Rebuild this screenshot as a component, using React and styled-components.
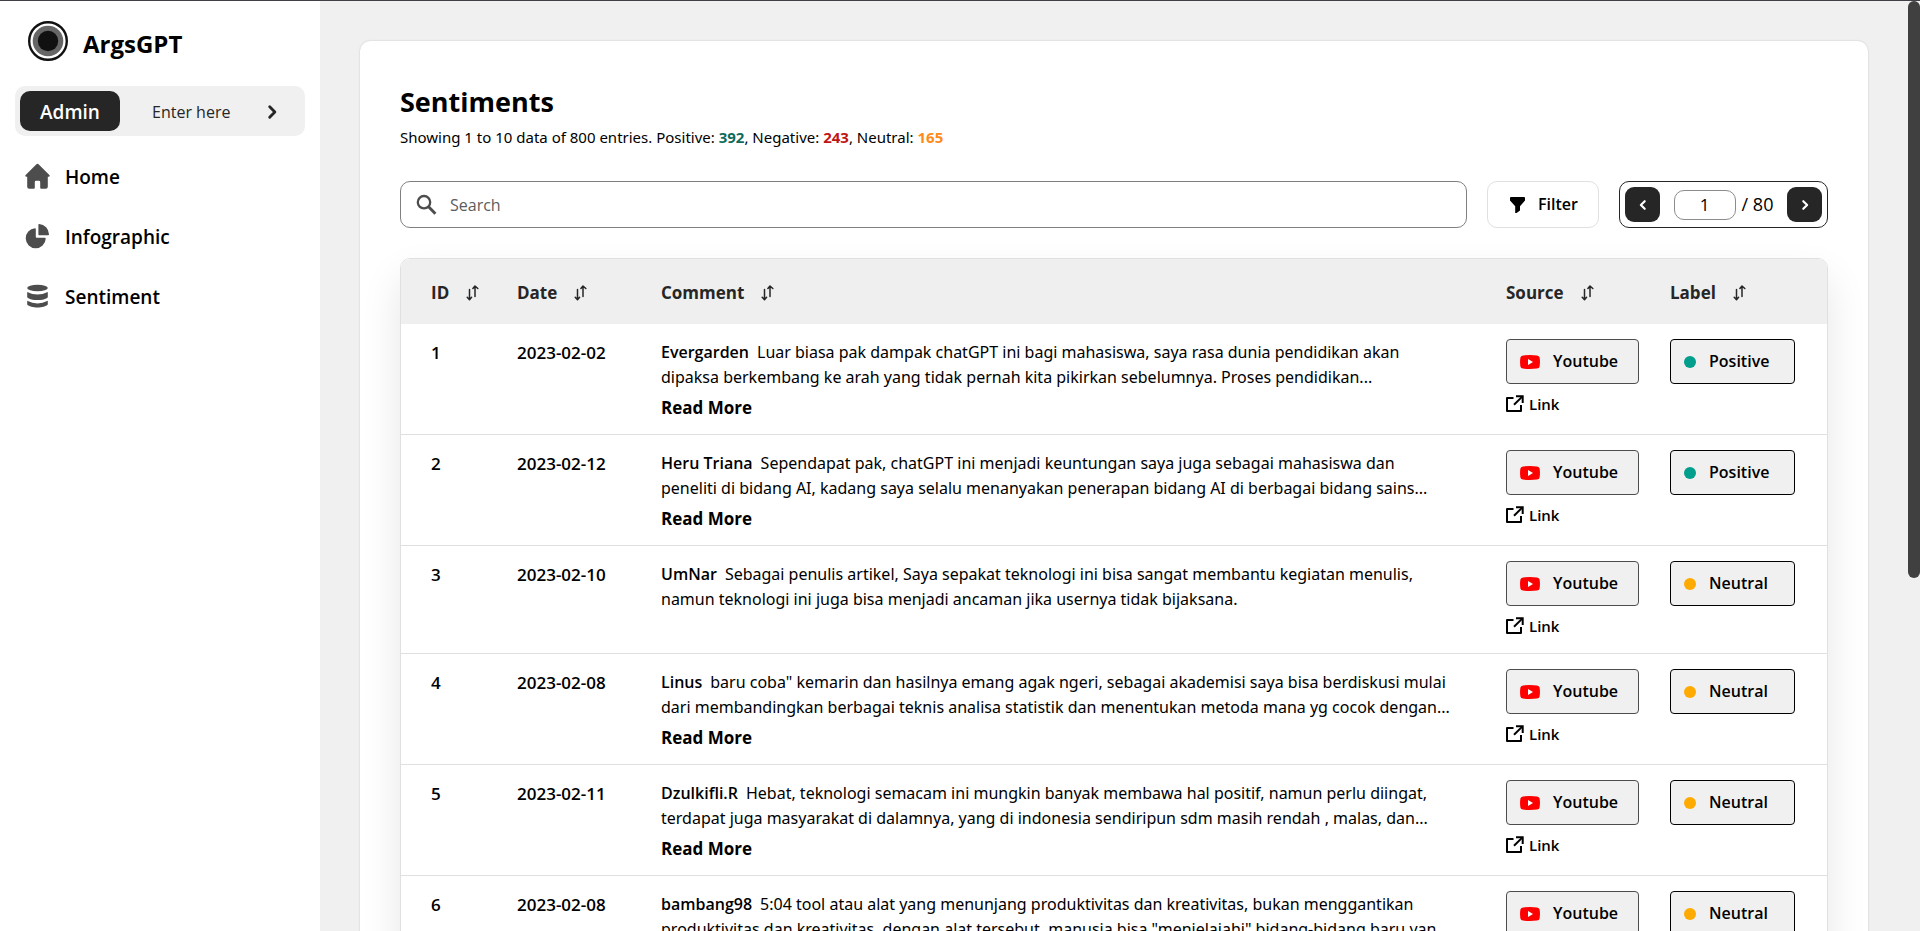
import React from "react";
import styled, { createGlobalStyle } from "styled-components";

const GlobalStyle = createGlobalStyle`
  * { box-sizing: border-box; }
  body {
    margin: 0;
    background: #f0f0f0;
    color: #000;
    font-family: "Open Sans", "Noto Sans", sans-serif;
    font-size: 16px;
    line-height: 25px;
  }
  button, input { font: inherit; color: inherit; margin: 0; }
  button { cursor: pointer; }
  a { color: inherit; text-decoration: none; }
`;

const Shell = styled.div`
  display: flex;
  height: 100vh;
  border-top: 1px solid #404045;
  overflow: hidden;
`;

const Sidebar = styled.aside`
  flex: 0 0 320px;
  padding: 20px 15px;
  background: #fff;
`;

const Brand = styled.div`
  display: flex;
  align-items: center;
  gap: 15px;
  height: 40px;
  padding-left: 13px;
`;

const BrandName = styled.span`
  padding-top: 4px;
  font-size: 24px;
  font-weight: 700;
`;

const AdminCard = styled.div`
  display: flex;
  align-items: center;
  height: 50px;
  margin-top: 25px;
  padding: 5px;
  border-radius: 10px;
  background: #f0f0f0;
`;

const AdminTag = styled.span`
  flex: 0 0 100px;
  height: 40px;
  border-radius: 10px;
  background: #262626;
  color: #fff;
  font-size: 19px;
  font-weight: 600;
  line-height: 42px;
  text-align: center;
`;

const EnterLink = styled.a`
  flex: 1;
  display: flex;
  align-items: center;
  justify-content: space-between;
  padding: 2px 20px 0 32px;
  color: #262626;
`;

const Nav = styled.nav`
  display: flex;
  flex-direction: column;
  gap: 20px;
  margin-top: 20px;
`;

const NavLink = styled.a`
  display: flex;
  align-items: center;
  gap: 14px;
  height: 40px;
  padding-left: 9px;
`;

const NavText = styled.span`
  padding-top: 2px;
  font-size: 19px;
  font-weight: 600;
`;

const NavIcon = styled.svg.attrs({ width: 27, height: 27, viewBox: "0 0 27 27", fill: "currentColor", "aria-hidden": true })`
  color: #4d4d4d;
`;

const Main = styled.main`
  flex: 1;
  min-width: 0;
  padding: 40px;
  overflow-y: auto;
  scrollbar-width: none;
`;

const Card = styled.section`
  padding: 40px;
  border-radius: 10px;
  background: #fff;
  box-shadow: 0 0 2px rgba(0, 0, 0, 0.2);
`;

const Title = styled.h1`
  margin: 0;
  font-size: 27px;
  font-weight: 700;
  line-height: 42px;
`;

const Summary = styled.p`
  margin: 0;
  font-family: "Noto Sans", sans-serif;
  font-size: 15px;
  line-height: 28px;
`;

const TONES = { positive: "#0f6b5c", negative: "#c01515", neutral: "#ff8c1a" };
const Count = styled.strong`
  color: ${(p) => TONES[p.$tone]};
`;

const Toolbar = styled.div`
  display: flex;
  gap: 20px;
  height: 47px;
  margin: 30px 0;
`;

const SearchBox = styled.label`
  flex: 1;
  display: flex;
  align-items: center;
  gap: 12px;
  padding: 0 15px;
  border: 1px solid #808080;
  border-radius: 10px;
  color: #4d4d4d;
`;

const SearchInput = styled.input`
  flex: 1;
  min-width: 0;
  padding: 2px 0 0;
  border: 0;
  outline: 0;
  background: none;
  &::placeholder { color: #5c5c5c; opacity: 1; }
`;

const FilterButton = styled.button`
  display: flex;
  align-items: center;
  gap: 13px;
  width: 112px;
  padding: 0 0 0 22px;
  border: 1px solid #e0e0e0;
  border-radius: 10px;
  background: #fff;
  font-weight: 600;
`;

const Pager = styled.div`
  display: flex;
  align-items: center;
  justify-content: space-between;
  width: 209px;
  padding: 5px;
  border: 1px solid #262626;
  border-radius: 10px;
`;

const PageButton = styled.button`
  display: flex;
  align-items: center;
  justify-content: center;
  width: 35px;
  height: 35px;
  padding: 0;
  border: 0;
  border-radius: 9px;
  background: #262626;
  color: #fff;
`;

const PageCount = styled.label`
  display: flex;
  align-items: center;
  gap: 6px;
  font-size: 18px;
`;

const PageInput = styled.input`
  width: 62px;
  height: 30px;
  border: 1px solid #8c8c8c;
  border-radius: 10px;
  background: #fff;
  font-size: 17px;
  text-align: center;
`;

const TableFrame = styled.div`
  border: 1px solid #e0e0e0;
  border-radius: 10px;
  box-shadow: 0 20px 40px rgba(0, 0, 0, 0.1);
  overflow: hidden;
`;

const Table = styled.table`
  width: 100%;
  border-collapse: separate;
  border-spacing: 0;
  table-layout: fixed;
  background: #fff;
`;

const Col = styled.col`
  width: ${(p) => p.$width};
`;

const HeadCell = styled.th`
  height: 65px;
  padding: 2px 0 0 ${(p) => (p.$first ? "30px" : "0")};
  background: #efefef;
  color: #262626;
  text-align: left;
  font-size: 17px;
  font-weight: 700;
`;

const SortButton = styled.button`
  display: flex;
  align-items: center;
  gap: 17px;
  padding: 0;
  border: 0;
  background: none;
`;

const Cell = styled.td`
  padding: 15px 0 15px ${(p) => (p.$first ? "30px" : "0")};
  border-bottom: 1px solid #e0e0e0;
  vertical-align: top;
  white-space: nowrap;
`;

const TextCell = styled(Cell)`
  padding-top: 16px;
  padding-bottom: 14px;
  font-size: ${(p) => (p.$strong ? "17px" : "16px")};
  font-weight: ${(p) => (p.$strong ? 600 : 400)};
`;

const Comment = styled.p`
  margin: 0;
  font-family: "Noto Sans", sans-serif;
`;

const Author = styled.span`
  margin-right: 8px;
  font-family: "Open Sans", sans-serif;
  font-weight: 600;
`;

const ReadMore = styled.button`
  display: block;
  margin-top: 5px;
  padding: 0;
  border: 0;
  background: none;
  font-size: 17px;
  font-weight: 700;
`;

const Badge = styled.div`
  display: flex;
  align-items: center;
  width: ${(p) => p.$width};
  height: 45px;
  gap: 13px;
  padding-left: 13px;
  border: 1px solid ${(p) => p.$line};
  border-radius: 4px;
  background: #f0f0f0;
  font-weight: 600;
`;

const Dot = styled.span`
  width: 12px;
  height: 12px;
  border-radius: 50%;
  background: ${(p) => p.$color};
`;

const SourceLink = styled.a`
  display: flex;
  align-items: center;
  gap: 5px;
  height: 24px;
  margin-top: 8px;
  font-size: 15px;
  font-weight: 600;
`;

const ScrollTrack = styled.div`
  flex: 0 0 12px;
  background: #f0f0f0;
`;

const ScrollThumb = styled.div`
  height: 62%;
  border-radius: 6px;
  background: #404040;
`;

const Logo = () => (
  <svg width="40" height="40" viewBox="0 0 40 40" aria-hidden="true">
    <circle cx="20" cy="20" r="18.8" fill="#fff" stroke="#111" strokeWidth="2.4" />
    <circle cx="20" cy="20" r="15.3" fill="#666" />
    <circle cx="20" cy="20" r="10.2" fill="#111" />
  </svg>
);

const HomeIcon = () => (
  <NavIcon>
    <path d="M12.200 1.400q1.300-1.200 2.600 0L25.600 12.300q.6 1.200-.8 1.400H23.800V23.800q0 2-2 2H17.200q-1 0-1-1V19q0-1.200-1.200-1.200h-3q-1.200 0-1.200 1.200v5.800q0 1-1 1H5.200q-2 0-2-2V13.700H2.200q-1.400-.2-.8-1.400Z" />
  </NavIcon>
);

const PieIcon = () => (
  <NavIcon>
    <path d="M11 5.300q.8-.1.800.8V14q0 .8.800.8h8.300q.9 0 .8.900A10 10 0 1 1 11 5.300Z" />
    <path d="M14.400 1.800q0-.8.800-.7A10.300 10.300 0 0 1 25 11.300q.1.900-.8.900h-9q-.8 0-.8-.8Z" />
  </NavIcon>
);

const StackIcon = () => (
  <NavIcon>
    <ellipse cx="13.500" cy="5" rx="10.300" ry="3.300" />
    <path d="M3.200 9Q13.500 14.200 23.800 9v5.200C20.500 18 6.500 18 3.200 14.200Z" />
    <path d="M3.200 17.800Q13.500 23 23.800 17.800v3.800C20.500 25.600 6.500 25.600 3.200 21.600Z" />
  </NavIcon>
);

const YoutubeIcon = () => (
  <svg width="20" height="14" viewBox="0 0 20 14" aria-hidden="true">
    <path fill="#f00" d="M3 .4Q10-.4 17 .4q2.300.3 2.600 2.200.7 4.400 0 8.800-.3 1.900-2.600 2.200-7 .8-14 0Q.7 13.300.4 11.400q-.7-4.400 0-8.800Q.7.7 3 .4Z" />
    <path fill="#fff" d="M8 4.100 13 7 8 9.900Z" />
  </svg>
);

const Chevron = ({ left, size = 12 }) => (
  <svg width={size} height={size} viewBox="0 0 14 14" fill="none" stroke="currentColor" strokeWidth="2.5" strokeLinecap="round" strokeLinejoin="round" aria-hidden="true">
    <path d={left ? "M9 2.5 4.5 7 9 11.5" : "M5 2.5 9.5 7 5 11.5"} />
  </svg>
);

const SearchIcon = () => (
  <svg width="22" height="22" viewBox="0 0 22 22" fill="none" stroke="currentColor" aria-hidden="true">
    <circle cx="8" cy="8.200" r="6.200" strokeWidth="2.300" />
    <path d="m12.600 12.800 6.800 7" strokeWidth="2.900" />
  </svg>
);

const FilterIcon = () => (
  <svg width="15" height="16" viewBox="0 0 15 16" fill="currentColor" aria-hidden="true">
    <path d="M1 0h13q1 0 1 1v2.600L10 9.200v4.300L6.600 16H5.200V9.200L0 3.600V1q0-1 1-1Z" />
  </svg>
);

const SortIcon = () => (
  <svg width="13" height="16" viewBox="0 0 13 16" fill="none" stroke="currentColor" strokeWidth="1.5" strokeLinecap="round" strokeLinejoin="round" aria-hidden="true">
    <path d="M3.500 4.500V14.500M1.200 12.300 3.500 14.800 5.600 12.300" />
    <path d="M9 11.500V1.200M6.900 3.500 9 1 11.800 3.500" />
  </svg>
);

const OpenIcon = () => (
  <svg width="18" height="18" viewBox="0 0 18 18" fill="none" stroke="currentColor" strokeWidth="2" aria-hidden="true">
    <path d="M7.500 3H1v13h14V10" strokeLinejoin="round" />
    <path d="M10 1.200h6.700V8" />
    <path d="M16.500 1.400 8 9.800" />
  </svg>
);

const NAV = [
  { label: "Home", Icon: HomeIcon },
  { label: "Infographic", Icon: PieIcon },
  { label: "Sentiment", Icon: StackIcon },
];

const COLUMNS = [
  { label: "ID", width: "116px" },
  { label: "Date", width: "144px" },
  { label: "Comment", width: "auto" },
  { label: "Source", width: "164px" },
  { label: "Label", width: "157px" },
];

const DOTS = { Positive: "#009e8c", Neutral: "#ffaa00" };

const ROWS = [
  { id: 1, date: "2023-02-02", author: "Evergarden", more: true, label: "Positive", lines: ["Luar biasa pak dampak chatGPT ini bagi mahasiswa, saya rasa dunia pendidikan akan", "dipaksa berkembang ke arah yang tidak pernah kita pikirkan sebelumnya. Proses pendidikan..."] },
  { id: 2, date: "2023-02-12", author: "Heru Triana", more: true, label: "Positive", lines: ["Sependapat pak, chatGPT ini menjadi keuntungan saya juga sebagai mahasiswa dan", "peneliti di bidang AI, kadang saya selalu menanyakan penerapan bidang AI di berbagai bidang sains..."] },
  { id: 3, date: "2023-02-10", author: "UmNar", more: false, label: "Neutral", lines: ["Sebagai penulis artikel, Saya sepakat teknologi ini bisa sangat membantu kegiatan menulis,", "namun teknologi ini juga bisa menjadi ancaman jika usernya tidak bijaksana."] },
  { id: 4, date: "2023-02-08", author: "Linus", more: true, label: "Neutral", lines: ["baru coba\" kemarin dan hasilnya emang agak ngeri, sebagai akademisi saya bisa berdiskusi mulai", "dari membandingkan berbagai teknis analisa statistik dan menentukan metoda mana yg cocok dengan..."] },
  { id: 5, date: "2023-02-11", author: "Dzulkifli.R", more: true, label: "Neutral", lines: ["Hebat, teknologi semacam ini mungkin banyak membawa hal positif, namun perlu diingat,", "terdapat juga masyarakat di dalamnya, yang di indonesia sendiripun sdm masih rendah , malas, dan..."] },
  { id: 6, date: "2023-02-08", author: "bambang98", more: true, label: "Neutral", lines: ["5:04 tool atau alat yang menunjang produktivitas dan kreativitas, bukan menggantikan", "produktivitas dan kreativitas, dengan alat tersebut, manusia bisa \"menjelajahi\" bidang-bidang baru yan..."] },
];

export default function App() {
  return (
    <Shell>
      <GlobalStyle />
      <Sidebar>
        <Brand><Logo /><BrandName>ArgsGPT</BrandName></Brand>
        <AdminCard>
          <AdminTag>Admin</AdminTag>
          <EnterLink href="#admin">Enter here<Chevron size={16} /></EnterLink>
        </AdminCard>
        <Nav>
          {NAV.map(({ label, Icon }) => (
            <NavLink key={label} href={`#${label.toLowerCase()}`}><Icon /><NavText>{label}</NavText></NavLink>
          ))}
        </Nav>
      </Sidebar>
      <Main>
        <Card>
          <Title>Sentiments</Title>
          <Summary>
            Showing 1 to 10 data of 800 entries. Positive: <Count $tone="positive">392</Count>, Negative: <Count $tone="negative">243</Count>, Neutral: <Count $tone="neutral">165</Count>
          </Summary>
          <Toolbar>
            <SearchBox>
              <SearchIcon />
              <SearchInput type="text" placeholder="Search" aria-label="Search" />
            </SearchBox>
            <FilterButton type="button"><FilterIcon />Filter</FilterButton>
            <Pager>
              <PageButton type="button" aria-label="Previous page"><Chevron left /></PageButton>
              <PageCount>
                <PageInput type="text" defaultValue="1" aria-label="Page" />/ 80
              </PageCount>
              <PageButton type="button" aria-label="Next page"><Chevron /></PageButton>
            </Pager>
          </Toolbar>
          <TableFrame>
            <Table>
              <colgroup>
                {COLUMNS.map((c) => <Col key={c.label} $width={c.width} />)}
              </colgroup>
              <thead>
                <tr>
                  {COLUMNS.map((c, i) => (
                    <HeadCell key={c.label} $first={i === 0}>
                      <SortButton type="button">{c.label}<SortIcon /></SortButton>
                    </HeadCell>
                  ))}
                </tr>
              </thead>
              <tbody>
                {ROWS.map((row) => (
                  <tr key={row.id}>
                    <TextCell $first $strong>{row.id}</TextCell>
                    <TextCell $strong>{row.date}</TextCell>
                    <TextCell>
                      <Comment>
                        <Author>{row.author}</Author>{row.lines[0]}<br />{row.lines[1]}
                      </Comment>
                      {row.more && <ReadMore type="button">Read More</ReadMore>}
                    </TextCell>
                    <Cell>
                      <Badge $width="133px" $line="#4d4d4d"><YoutubeIcon />Youtube</Badge>
                      <SourceLink href="#source"><OpenIcon />Link</SourceLink>
                    </Cell>
                    <Cell>
                      <Badge $width="125px" $line="#000"><Dot $color={DOTS[row.label]} />{row.label}</Badge>
                    </Cell>
                  </tr>
                ))}
              </tbody>
            </Table>
          </TableFrame>
        </Card>
      </Main>
      <ScrollTrack><ScrollThumb /></ScrollTrack>
    </Shell>
  );
}
